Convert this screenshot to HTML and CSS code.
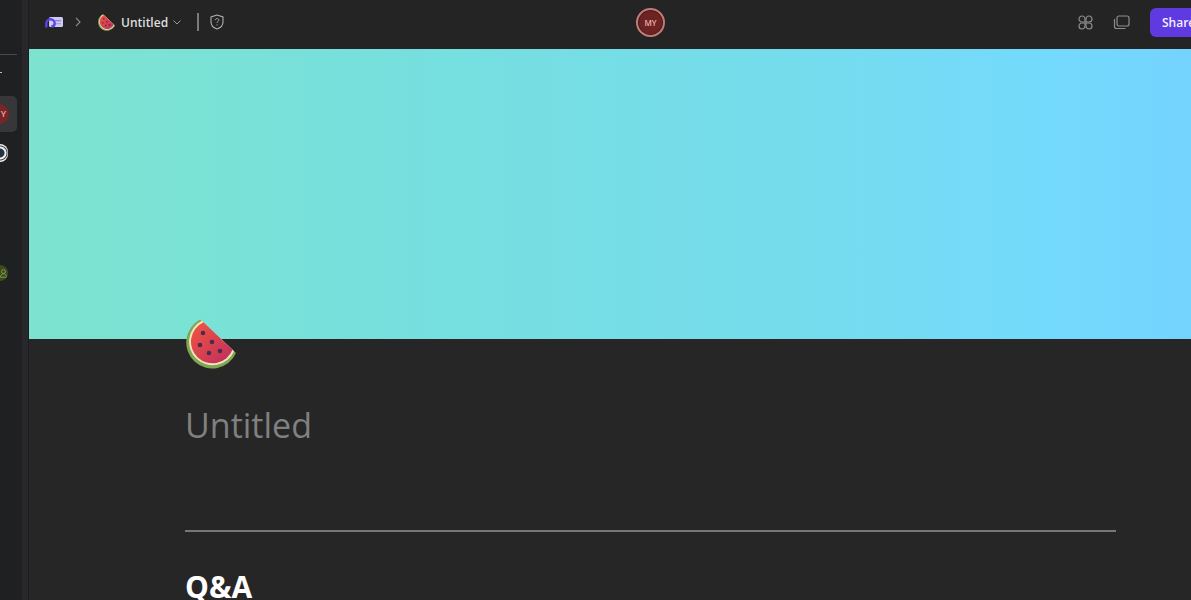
FILE: index.html
```html
<!DOCTYPE html>
<html lang="en">
<head>
  <meta charset="UTF-8">
  <title>Untitled</title>
  <link rel="stylesheet" href="styles.css">
</head>
<body>
  <!-- left rail, mostly cut off by the window edge -->
  <aside class="rail">
    <div class="rail-rule"></div>
    <div class="rail-dash"></div>
    <div class="rail-active"><span class="rail-avatar">Y</span></div>
    <div class="rail-app"></div>
    <div class="rail-user">
      <svg width="12" height="14" viewBox="0 0 12 14" fill="none" stroke="#8fae5c" stroke-width="1"><circle cx="6" cy="4.5" r="2.6"/><path d="M2 12c0-3 1.6-4.6 4-4.6s4 1.600 4 4.600z"/></svg>
    </div>
  </aside>

  <div class="main">
    <header class="topbar">
      <div class="crumbs">
        <svg class="logo" width="18" height="12" viewBox="0 0 18 12" fill="none">
          <rect x="4" y="1" width="14" height="10" rx="1.500" fill="#cfcaf2"/>
          <rect x="10" y="4" width="6" height="1.400" fill="#8f84ee"/>
          <rect x="10" y="7" width="6" height="1.400" fill="#a79ff2"/>
          <path d="M1.300 11.500V7.500a4.200 4.200 0 0 1 8.400 0c0 2-1.600 3-3.400 3" stroke="#5a45e6" stroke-width="2.400"/>
        </svg>
        <svg class="chev-right" width="6" height="10" viewBox="0 0 6 10" fill="none" stroke="#8a8a8a" stroke-width="1.100"><path d="M1 1l4 4-4 4"/></svg>
        <svg class="melon-small" width="17" height="17" viewBox="0 0 50 50"><use href="#melon"/></svg>
        <span class="doc-name">Untitled</span>
        <svg class="chev-down" width="8" height="5" viewBox="0 0 8 5" fill="none" stroke="#9a9a9a" stroke-width="1"><path d="M.5.500L4 4 7.500.500"/></svg>
        <span class="sep"></span>
        <svg class="shield" width="14" height="16" viewBox="0 0 14 16" fill="none" stroke="#b0b0b0" stroke-width="1.100">
          <path d="M7 1l6 2v5c0 3.500-2.500 5.800-6 7-3.500-1.200-6-3.500-6-7V3z"/>
          <path d="M5.200 6.200C5.300 5.100 6 4.600 7 4.600s1.800.6 1.800 1.500C8.800 7.400 7 7.400 7 8.800" stroke-width="1"/>
          <circle cx="7" cy="10.800" r=".6" fill="#b0b0b0" stroke="none"/>
        </svg>
      </div>
      <div class="presence"><span class="avatar">MY</span></div>
      <div class="actions">
        <svg width="15" height="15" viewBox="0 0 15 15" fill="none" stroke="#8d8d8d" stroke-width="1.200">
          <path d="M7 7H4A3 3 0 1 1 7 4z"/>
          <path d="M8 7h3a3 3 0 1 0-3-3z"/>
          <path d="M7 8H4a3 3 0 1 0 3 3z"/>
          <path d="M8 8h3a3 3 0 1 1-3 3z"/>
        </svg>
        <svg width="17" height="15" viewBox="0 0 17 15" fill="none" stroke="#8d8d8d" stroke-width="1.200">
          <rect x="4" y="1" width="12" height="10" rx="2"/>
          <path d="M1.500 4v7.500c0 1 .8 2 2 2h9"/>
        </svg>
        <button class="share">Share</button>
      </div>
    </header>

    <div class="banner"></div>

    <main class="doc">
      <svg class="melon-big" width="50" height="50" viewBox="0 0 50 50">
        <defs>
          <linearGradient id="flesh" x1="0" y1="0" x2="1" y2="1">
            <stop offset="0" stop-color="#f2563f"/>
            <stop offset="1" stop-color="#bd2e5e"/>
          </linearGradient>
          <g id="melon">
            <path d="M14 .5A26 26 0 1 0 50 34z" fill="#7fa650"/>
            <path d="M15.900 1.800A23.500 23.500 0 1 0 48.100 32.200z" fill="#f2e6c0"/>
            <path d="M17.500 3.300A21.500 21.500 0 1 0 46.500 30.700z" fill="url(#flesh)"/>
            <g fill="#4a2a55">
              <circle cx="17" cy="14" r="2.300"/><circle cx="14" cy="26" r="2.300"/><circle cx="26" cy="23" r="2.300"/>
              <circle cx="23" cy="34" r="2.300"/><circle cx="34" cy="32" r="2.300"/>
            </g>
          </g>
        </defs>
        <use href="#melon"/>
      </svg>
      <h1 class="title">Untitled</h1>
      <hr class="rule">
      <h2 class="section">Q&amp;A</h2>
    </main>
  </div>
</body>
</html>
```

FILE: styles.css
```css
* {box-sizing: border-box; margin: 0; padding: 0;}
html, body {height: 100%; overflow: hidden;}
body {display: flex; background: #262626; color: #fff; font-family: "Open Sans", "Noto Sans", sans-serif;}

/* rail */
.rail {width: 29px; flex: none; height: 600px; overflow: hidden; background: linear-gradient(90deg, #1e2022 0, #1e2022 22px, #27272c 22px, #27272c 28px, #1d1d20 28px);}
.rail-rule {width: 17px; height: 1px; margin-top: 54px; background: #4b4b4b;}
.rail-dash {width: 2px; height: 1px; margin-top: 17px; background: #bbb;}
.rail-active {width: 17px; height: 36px; margin-top: 23px; background: #37373a; border-radius: 0 5px 5px 0; display: flex; align-items: center; justify-content: flex-end; padding-right: 9px;}
.rail-avatar {flex: none; width: 20px; height: 20px; border-radius: 50%; background: #772527; color: #e5a9a9; font-size: 9px; font-weight: 600; line-height: 20px; text-align: right; padding-right: 3px; margin-right: -1px;}
.rail-app {width: 8px; height: 18px; margin-top: 12px; border-radius: 0 9px 9px 0; background: radial-gradient(circle at 0 50%, #24323d 0, #24323d 4px, #f2f2f2 5px, #f2f2f2 6px, #3c3c3c 7px, #f2f2f2 8px);}
.rail-user {width: 8px; height: 16px; margin-top: 103px; border-radius: 0 8px 8px 0; background: #3d4a1c; display: flex; justify-content: flex-end; align-items: center; overflow: hidden;}
.rail-user svg {flex: none; width: 9px; height: 11px;}

.main {flex: 1; min-width: 0; display: flex; flex-direction: column;}

/* top bar */
.topbar {height: 49px; flex: none; display: grid; grid-template-columns: 591px 29px 1fr; align-items: center; padding: 0 0 5px 16px; background: #242424;}
.crumbs {display: flex; align-items: center;}
.logo {margin-right: 12px;}
.chev-right {margin-right: 17px;}
.melon-small {margin-right: 6px;}
.doc-name {font-size: 12px; font-weight: 600; color: #dedede; margin-right: 5px;}
.chev-down {margin-right: 16px; margin-top: 1px;}
.sep {width: 1.500px; height: 18px; background: #7a7a7a; margin-right: 11px;}
.presence {display: flex;}
.avatar {width: 29px; height: 29px; border-radius: 50%; background: #6e2323; border: 2px solid #c27a78; box-shadow: inset 0 0 0 1px #3a1c1c; color: #e6b3b0; font-size: 8px; font-weight: 600; display: flex; align-items: center; justify-content: center;}
.actions {display: flex; justify-content: flex-end; align-items: center; gap: 20px; overflow: hidden;}
.share {flex: none; width: 49px; height: 29px; margin-right: -8px; border: none; border-radius: 6px 0 0 6px; background: #5f3ae0; color: #f2f0ff; font-family: inherit; font-size: 12px; font-weight: 600; text-align: left; padding-left: 12px;}

/* cover */
.banner {height: 290px; flex: none; background: linear-gradient(90deg, #7de3cf 0, #76dfdf 35%, #75dcec 65%, #74dafd 88%, #74d3fd 100%);}

/* page */
.doc {padding: 0 75px 0 156px;}
.melon-big {display: block; margin: -20px 0 0 1px;}
.title {font-size: 34px; font-weight: 400; color: #808080; line-height: 46px; margin-top: 33px;}
.rule {border: none; height: 2px; background: #777; margin-top: 82px;}
.section {font-size: 30px; font-weight: 700; color: #fff; line-height: 36px; margin-top: 37px;}
```
